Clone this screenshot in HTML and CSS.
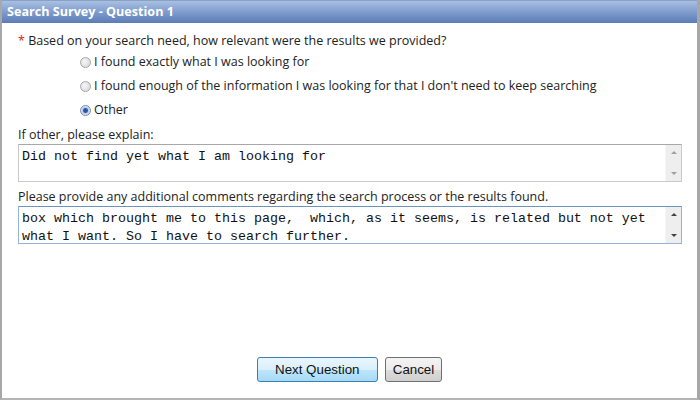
FILE: index.html
```html
<!DOCTYPE html>
<html lang="en">
<head>
  <meta charset="UTF-8">
  <title>Search Survey - Question 1</title>
  <link rel="stylesheet" href="styles.css">
</head>
<body>
  <div class="dialog">
    <div class="titlebar">Search Survey - Question 1</div>

    <div class="content">
      <div class="question"><span class="req">*</span> Based on your search need, how relevant were the results we provided?</div>

      <div class="options">
        <label class="option"><span class="radio"></span>I found exactly what I was looking for</label>
        <label class="option"><span class="radio"></span>I found enough of the information I was looking for that I don't need to keep searching</label>
        <label class="option"><span class="radio checked"></span>Other</label>
      </div>

      <div class="field-label">If other, please explain:</div>
      <div class="textbox">
        <div class="textbox-text">Did not find yet what I am looking for</div>
        <div class="scrollbar"><span class="arrow up"></span><span class="arrow down"></span></div>
      </div>

      <div class="field-label">Please provide any additional comments regarding the search process or the results found.</div>
      <div class="textbox focused">
        <div class="textbox-text">box which brought me to this page,&nbsp; which, as it seems, is related but not yet<br>what I want. So I have to search further.</div>
        <div class="scrollbar"><span class="arrow up dark"></span><span class="arrow down dark"></span></div>
      </div>
    </div>

    <div class="buttons">
      <button class="btn primary">Next Question</button>
      <button class="btn">Cancel</button>
    </div>
  </div>
</body>
</html>
```

FILE: styles.css
```css
html, body {
  margin: 0;
  padding: 0;
  background: #fff;
}
body {
  font-family: "Open Sans", "Liberation Sans", sans-serif;
  font-size: 12.5px;
  color: #222;
}
.dialog {
  width: 700px;
  height: 400px;
  box-sizing: border-box;
  border-left: 2px solid #a8a8a8;
  border-right: 3px solid #a8a8a8;
  border-bottom: 2px solid #b4b4b4;
  display: flex;
  flex-direction: column;
}
.titlebar {
  height: 22px;
  line-height: 22px;
  padding-left: 5px;
  color: #fff;
  font-weight: bold;
  font-size: 12.6px;
  background: linear-gradient(#a9c0e2, #7f9ccd 50%, #5b7cb6);
  border-top: 1px solid #8aa0c4;
}
.content {
  padding: 8px 16px 0 16px;
}
.question {
  height: 20px;
  line-height: 20px;
}
.req {
  color: #d22;
}
.options {
  padding-left: 62px;
  display: flex;
  flex-direction: column;
  gap: 4px;
  margin-top: 1px;
}
.option {
  height: 20px;
  line-height: 20px;
  display: flex;
  align-items: center;
}
.radio {
  width: 11px;
  height: 11px;
  border-radius: 50%;
  border: 1px solid #a8a8a8;
  background: radial-gradient(circle at 40% 40%, #f6f6f6, #d4d4d4);
  margin-right: 3px;
  box-sizing: border-box;
}
.radio.checked {
  border-color: #7a8ca8;
  background: radial-gradient(circle, #1f4f9a 0, #2c5fae 2px, #b9cbe6 3px, #e8eef7 5px);
}
.field-label {
  margin-top: 5px;
  height: 19px;
  line-height: 19px;
}
.textbox {
  width: 664px;
  height: 38px;
  box-sizing: border-box;
  border: 1px solid #c9c9c9;
  border-top-color: #a8a8a8;
  display: flex;
  margin-bottom: 3px;
}
.textbox.focused {
  border-color: #93b4d6;
  border-top-color: #6d93bf;
}
.textbox-text {
  flex: 1;
  padding: 3px 3px;
  font-family: "Liberation Mono", "Courier New", monospace;
  font-size: 13.33px;
  line-height: 18px;
  color: #111;
  white-space: nowrap;
  overflow: hidden;
}
.scrollbar {
  width: 16px;
  background: #eeeeee;
  border-left: 1px solid #f6f6f6;
  display: flex;
  flex-direction: column;
  justify-content: space-between;
  align-items: center;
  padding: 6px 0;
  box-sizing: border-box;
}
.arrow {
  width: 0;
  height: 0;
  border-left: 3px solid transparent;
  border-right: 3px solid transparent;
}
.arrow.up {
  border-bottom: 3px solid #a0a0a0;
}
.arrow.down {
  border-top: 3px solid #a0a0a0;
}
.arrow.up.dark {
  border-bottom-color: #404040;
}
.arrow.down.dark {
  border-top-color: #404040;
}
.buttons {
  margin-top: auto;
  margin-bottom: 16px;
  display: flex;
  justify-content: center;
  gap: 7px;
}
.btn {
  height: 25px;
  font-family: "Liberation Sans", Arial, sans-serif;
  font-size: 13.33px;
  color: #111;
  padding: 0 7px;
  border: 1px solid #707070;
  border-radius: 3px;
  background: linear-gradient(#f4f4f4, #ebebeb 50%, #dcdcdc 51%, #cfcfcf);
}
.btn.primary {
  width: 121px;
  border-color: #3c7fb1;
  background: linear-gradient(#eaf6fd, #d9f0fc 50%, #bee6fd 51%, #a7d9f5);
}
```
